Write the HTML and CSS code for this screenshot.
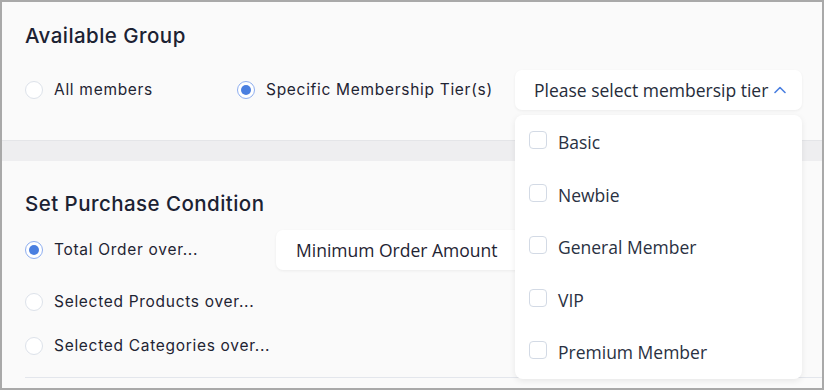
FILE: index.html
```html
<html>
<head>
  <title>Discount Settings</title>
  <link rel="stylesheet" href="styles.css">
</head>
<body>

<div class="frame">
  <div class="panel group-panel">
    <h3>Available Group</h3>
    <div class="option-row">
      <label class="radio-opt first"><span class="radio"></span>All members</label>
      <label class="radio-opt second"><span class="radio checked"></span>Specific Membership Tier(s)</label>
      <div class="select">
        <div class="select-trigger">
          <span>Please select membersip tier</span>
          <svg class="chevron" width="12" height="8" viewBox="0 0 12 8"><path d="M1 6.5 L6 1.5 L11 6.5" fill="none" stroke="#4a7fe0" stroke-width="1.6" stroke-linecap="round" stroke-linejoin="round"/></svg>
        </div>
        <ul class="select-menu">
          <li><span class="check"></span>Basic</li>
          <li><span class="check"></span>Newbie</li>
          <li><span class="check"></span>General Member</li>
          <li><span class="check"></span>VIP</li>
          <li><span class="check"></span>Premium Member</li>
        </ul>
      </div>
    </div>
  </div>

  <div class="divider-band"></div>

  <div class="panel condition-panel">
    <h3>Set Purchase Condition</h3>
    <div class="cond-list">
      <div class="cond-row">
        <label class="radio-opt cond-label"><span class="radio checked"></span>Total Order over...</label>
        <div class="amount-input">Minimum Order Amount</div>
      </div>
      <div class="cond-row small">
        <label class="radio-opt"><span class="radio"></span>Selected Products over...</label>
      </div>
      <div class="cond-row small">
        <label class="radio-opt"><span class="radio"></span>Selected Categories over...</label>
      </div>
    </div>
    <div class="bottom-line"></div>
  </div>
</div>

</body>
</html>
```

FILE: styles.css
```css
body {
  margin: 0;
  font-family: Inter, "Noto Sans", sans-serif;
  background: #fafafa;
  color: #1e2332;
}
.frame {
  width: 824px;
  height: 390px;
  box-sizing: border-box;
  border: 2px solid #a9a9a9;
  background: #fafafa;
  overflow: hidden;
}
.panel {
  padding: 0 20px 0 23px;
  background: #fafafa;
}
.group-panel {
  height: 139px;
  padding-top: 20px;
  box-sizing: border-box;
  border-bottom: 1px solid #e4e5e8;
}
h3 {
  margin: 0;
  font-size: 20.5px;
  line-height: 28px;
  font-weight: 500;
  color: #1c2233;
  letter-spacing: 0.45px;
}
.option-row {
  display: flex;
  align-items: center;
  margin-top: 20px;
  height: 40px;
}
.radio-opt {
  display: flex;
  align-items: center;
  font-size: 15.5px;
  letter-spacing: 0.7px;
  color: #1f2433;
  line-height: 24px;
}
.radio-opt.first {
  width: 212px;
}
.radio-opt.second {
  width: 278px;
}
.radio {
  width: 18px;
  height: 18px;
  box-sizing: border-box;
  border: 1px solid #dde2ea;
  border-radius: 50%;
  background: #fff;
  margin-right: 11px;
  display: flex;
  align-items: center;
  justify-content: center;
  flex-shrink: 0;
}
.radio.checked {
  border: 1.5px solid #8eaef0;
}
.radio.checked::after {
  content: "";
  width: 10px;
  height: 10px;
  border-radius: 50%;
  background: #4a7fe0;
}

/* select dropdown */
.select {
  position: relative;
  width: 287px;
  font-family: "Open Sans", "Noto Sans", sans-serif;
}
.select-trigger {
  height: 40px;
  box-sizing: border-box;
  background: #fff;
  border-radius: 7px;
  box-shadow: 0 1px 3px rgba(0,0,0,0.06);
  display: flex;
  align-items: center;
  justify-content: space-between;
  padding: 0 16px 0 19px;
  font-size: 17.5px;
  color: #262c3a;
}
.chevron {
  margin-top: -1px;
}
.select-menu {
  position: absolute;
  top: 45px;
  left: 0;
  width: 287px;
  margin: 0;
  padding: 0.75px 0;
  list-style: none;
  background: #fff;
  border-radius: 8px;
  box-shadow: 0 2px 6px rgba(0,0,0,0.08);
  z-index: 10;
}
.select-menu li {
  display: flex;
  align-items: center;
  height: 52.5px;
  padding: 0 14px;
  font-size: 17.5px;
  color: #2a3142;
}
.check {
  width: 18px;
  height: 18px;
  box-sizing: border-box;
  border: 1.5px solid #d3dae5;
  border-radius: 4px;
  background: #fff;
  margin-right: 11px;
  margin-top: -4px;
}

.divider-band {
  height: 20px;
  background: #eeeef0;
}

/* purchase condition */
.condition-panel {
  padding-top: 29px;
}
.cond-list {
  display: flex;
  flex-direction: column;
  gap: 20px;
  margin-top: 12px;
}
.cond-row {
  display: flex;
  align-items: center;
  height: 40px;
}
.cond-row.small {
  height: 24px;
}
.cond-label {
  width: 251px;
}
.amount-input {
  width: 300px;
  height: 40px;
  box-sizing: border-box;
  background: #fff;
  border-radius: 7px;
  box-shadow: 0 1px 3px rgba(0,0,0,0.06);
  display: flex;
  align-items: center;
  padding-left: 20px;
  font-family: "Open Sans", "Noto Sans", sans-serif;
  font-size: 17.5px;
  color: #1f2433;
}
.bottom-line {
  margin-top: 19px;
  height: 1px;
  background: #e3e6ec;
  margin-right: -20px;
}
```
